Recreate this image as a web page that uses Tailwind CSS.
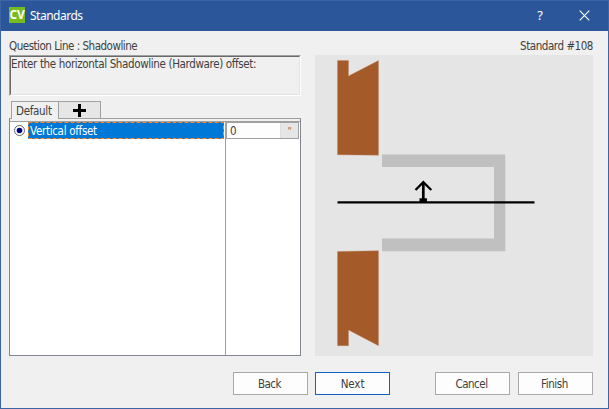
<!DOCTYPE html>
<html lang="en">
<head>
<meta charset="utf-8">
<title>Standards</title>
<script src="https://cdn.jsdelivr.net/npm/@tailwindcss/browser@4"></script>
</head>
<body class="overflow-hidden">
<div class="w-[609px] h-[409px] flex flex-col bg-[#f0f0f0] border border-[#3c65a6] text-[11.5px] leading-[14px] text-[#404040] font-['DejaVu_Sans_Condensed','DejaVu_Sans',sans-serif] whitespace-nowrap">
  <header class="h-[30px] shrink-0 bg-[#2b579a] text-white flex items-center pl-2 pr-[18px] font-['Noto_Sans',sans-serif]">
    <div class="size-4 bg-[#76bc21] flex items-center justify-center font-bold text-[12px] tracking-[-0.3px] font-['Open_Sans',sans-serif] mt-[-2px]">CV</div>
    <h1 class="ml-[5px] text-[12px] tracking-[-0.5px]">Standards</h1>
    <span class="ml-auto mr-[36px] text-[13px] -mt-[2px]">?</span>
    <svg class="size-[11px] -mt-[2px]" viewBox="0 0 11 11" stroke="white" stroke-width="1.1"><path d="M.7 .7 10.3 10.3M10.3 .7 .7 10.3"/></svg>
  </header>
  <main class="flex pl-2 pt-2 h-[325px] shrink-0">
    <section class="w-[292px] flex flex-col">
      <div class="h-4 tracking-[-0.48px]">Question Line : Shadowline</div>
      <div class="h-[41px] border border-t-[#a0a0a0] border-l-[#a0a0a0] border-r-white border-b-white">
        <div class="h-full border border-t-[#696969] border-l-[#696969] border-r-[#e3e3e3] border-b-[#e3e3e3]"><p class="tracking-[-0.36px]">Enter the horizontal Shadowline (Hardware) offset:</p></div>
      </div>
      <div class="flex mt-[5px] pl-[2px] h-[17px]">
        <div class="w-[48px] h-[18px] border border-b-0 border-[#a0a0a0] bg-[#f0f0f0] relative z-10 pl-1 pt-[2px] tracking-[-0.3px]">Default</div>
        <div class="w-[42px] h-[17px] border border-l-0 border-b-0 border-[#a0a0a0] bg-[#e6e6e6] flex items-center justify-center">
          <svg class="size-[13px] mt-px" viewBox="0 0 13 13" stroke="black" stroke-width="3"><path d="M0 6.5H13M6.5 0V13"/></svg>
        </div>
      </div>
      <div class="h-[238px] border border-t-[#a0a0a0] border-[#828790] bg-white flex flex-col">
        <div class="h-[3px] shrink-0 bg-[#f0f0f0] border-b border-[#a0a0a0]"></div>
        <div class="flex grow">
          <div class="w-[216px] border-r border-[#a0a0a0]">
            <div class="flex h-[17px] items-center">
              <svg class="w-[18px] h-[17px]" viewBox="0 0 18 17"><circle cx="9.5" cy="8.5" r="5" fill="white" stroke="#666"/><circle cx="9.5" cy="8.5" r="2.8" fill="#000080"/></svg>
              <div class="relative w-[196px] h-[17px] bg-[#0078d7] text-white pl-[2px] pt-[2px] tracking-[-0.3px]">Vertical offset
                <svg class="absolute inset-0 w-[196px] h-[17px]" fill="none" stroke="#ff8728" stroke-dasharray="4 2"><rect x=".5" y=".5" width="195" height="16"/></svg>
              </div>
            </div>
          </div>
          <div class="w-[73px] h-[17px] border border-[#a0a0a0] bg-[#fdfdfd] flex">
            <div class="w-[53px] pl-[3px] pt-px">0</div>
            <div class="grow border-l border-[#dedede] bg-[#e6e6e6] flex justify-center pt-[3px]">
              <span class="text-[9px] leading-[10px] text-[#b87545] font-bold">"</span>
            </div>
          </div>
        </div>
      </div>
    </section>
    <section class="ml-[14px] w-[278px]">
      <div class="h-4 text-right tracking-[-0.45px]">Standard #108</div>
      <svg class="w-[278px] h-[301px] bg-[#e5e5e5]" viewBox="315 55 278 301">
        <g fill="#a55b29" stroke="#bc8765" stroke-width=".4">
          <path d="M337.5 60.5H348.5V76L378.5 60.5V155.2L337.5 154.8Z"/>
          <path d="M337.5 251.5 378.5 250.7V345.7L348.5 330V345.7H337.5Z"/>
        </g>
        <path d="M382 154.5H505.3V251.3H382V238.5H494V167H382Z" fill="#c0c0c0"/>
        <path d="M337.5 202.3H534.5" stroke="black" stroke-width="2.3"/>
        <path d="M423.3 201V182" stroke="black" stroke-width="2.7"/>
        <path d="M415.5 190 423.3 182.2 431.3 190" fill="none" stroke="black" stroke-width="2.3"/>
        <path d="M419.5 198.3H427V202H419.5Z"/>
      </svg>
    </section>
  </main>
  <footer class="flex pl-[232px] pt-[16px]">
    <button class="w-[75px] h-[23px] border border-[#a9a9a9] bg-[#fdfdfd] pr-[2px] tracking-[-0.5px]">Back</button>
    <button class="ml-[7px] w-[75px] h-[23px] border border-[#0f62bd] bg-[#fdfdfd] tracking-[-0.1px]">Next</button>
    <button class="ml-[45px] w-[75px] h-[23px] border border-[#a9a9a9] bg-[#fdfdfd] pr-[2px] tracking-[-0.5px]">Cancel</button>
    <button class="ml-[8px] w-[75px] h-[23px] border border-[#a9a9a9] bg-[#fdfdfd] pr-[2px] tracking-[-0.4px]">Finish</button>
  </footer>
</div>
</body>
</html>
